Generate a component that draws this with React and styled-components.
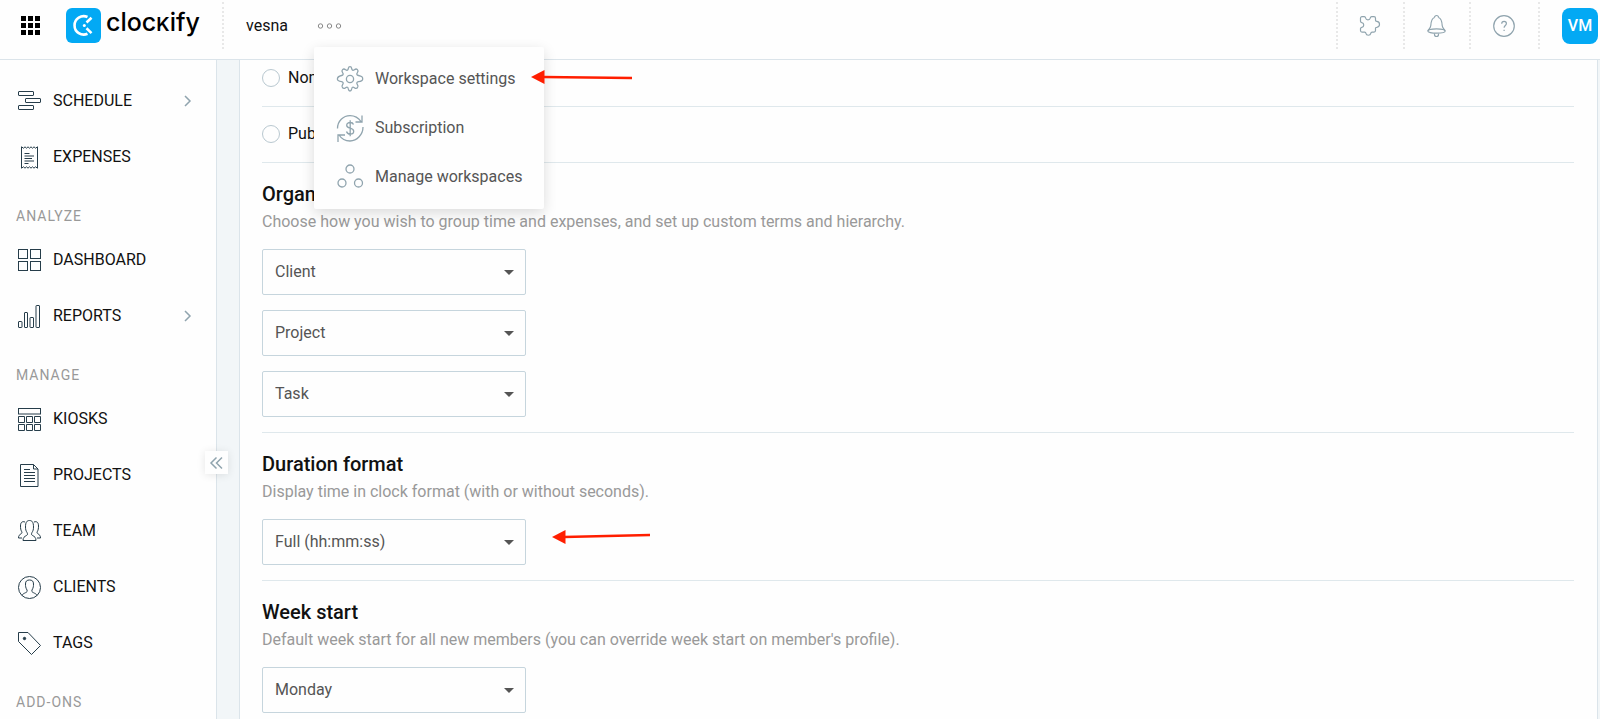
import React, { useState } from "react";
import styled, { createGlobalStyle } from "styled-components";

const GlobalStyle = createGlobalStyle`
  * {
    box-sizing: border-box;
  }
  body {
    margin: 0;
    background: #f2f6f8;
    color: #111;
    font-family: Roboto, "Liberation Sans", sans-serif;
    font-size: 16px;
    line-height: 20px;
  }
  button, select, input {
    font: inherit;
    color: inherit;
  }
  h2, p {
    margin: 0;
  }
`;

const icons = {
  schedule: (
    <>
      <rect x="0.5" y="1.5" width="15" height="4" rx="0.5" />
      <rect x="7.5" y="8.5" width="15" height="4" rx="0.5" />
      <rect x="0.5" y="15.5" width="15" height="4" rx="0.5" />
    </>
  ),
  expenses: (
    <>
      <path d="M3.5 .8l2 1.4 1.5-1.4 1.5 1.4L10 .8l1.5 1.4L13 .8l1.5 1.4L16 .8l1.5 1.4 2-1.4v21.4l-2-1.4-1.5 1.4-1.5-1.4-1.5 1.4-1.5-1.4-1.5 1.4-1.5-1.4L7 22.2l-1.5-1.4-2 1.4z" />
      <path d="M6.5 7.5h5M6.5 10h9.5M6.5 12.5h7.5M6.5 15h9.5M6.5 17.5h4" />
    </>
  ),
  dashboard: (
    <>
      <rect x="0.5" y="0.5" width="9" height="9" />
      <rect x="12.5" y="0.5" width="10" height="9" />
      <rect x="0.5" y="12.5" width="9" height="9" />
      <rect x="12.5" y="12.5" width="10" height="9" />
    </>
  ),
  reports: (
    <>
      <rect x="0.5" y="16.5" width="3.5" height="6" rx="0.5" />
      <rect x="6.5" y="7.5" width="3" height="15" rx="0.5" />
      <rect x="12" y="12.5" width="3.5" height="10" rx="0.5" />
      <rect x="18" y="0.5" width="3.5" height="22" rx="0.5" />
    </>
  ),
  kiosks: (
    <>
      <rect x="0.5" y="0.5" width="22" height="5.5" />
      <path d="M.5 8.5h6v6h-6zM8.5 8.5h6v6h-6zM16.5 8.5h6v6h-6zM.5 16.5h6v6h-6zM8.5 16.5h6v6h-6zM16.5 16.5h6v6h-6z" />
    </>
  ),
  projects: (
    <>
      <path d="M2.5.5h13l4.5 4.5v17.5h-17.5zM15.5.5v4.5h4.5" />
      <path d="M6 5.5h6M6 8.5h11M6 11.5h11M6 14.5h11M6 17.5h11" />
    </>
  ),
  team: (
    <>
      <path d="M5 20.5c0-3 1.5-4 3.5-5 1.5-.8 1-2 .5-3-1-1.5-1.5-3-1.5-5.5 0-5 1.5-6.500 4-6.500s4 1.500 4 6.500c0 2.500-.5 4-1.500 5.500-.5 1-1 2.200.5 3 2 1 3.500 2 3.500 5z" />
      <path d="M7 2C4 1 2.5 2.5 2.5 6c0 2.5.3 4 1 5.200.5 1 .8 1.800-.3 2.500C1.500 14.800.5 15.500.5 18H4M16 2c3-1 4.500.5 4.500 4 0 2.500-.3 4-1 5.200-.5 1-.8 1.800.3 2.500 1.700 1.100 2.700 1.800 2.700 4.300H19" />
    </>
  ),
  clients: (
    <>
      <circle cx="11.5" cy="11.5" r="11" />
      <path d="M4 19.500c.5-1.500 2-2 3.500-2.800 1.500-.7 2-1.200 1.500-2.700C7.500 11.500 7.500 10 7.500 8c0-3 1.500-4 4-4s4 1 4 4c0 2 0 3.500-1.500 6-.5 1.500 0 2 1.500 2.700 1.500.8 3 1.300 3.500 2.800" />
    </>
  ),
  tags: (
    <>
      <path d="M.5.5h9.5l12.500 13L13.500 22.500.5 9.500z" />
      <circle cx="6.5" cy="6.5" r="1.2" fill="currentColor" />
    </>
  ),
  settings: (
    <>
      <circle cx="13" cy="13" r="3.6" />
      <path d="M11.300 2.500c.5-2.400 2.900-2.400 3.400 0 .2 1.800 1.200 2.200 2.700 1.200 2.300-1.800 4.800.600 3 3-1.100 1.400-.6 2.500 1.100 2.800 3.400.7 4.400 1.300 4.200 3.500 0 1.700-.8 2.300-4.200 2.700-1.700.3-2.200 1.500-1.100 3 1.800 2.400-.7 4.800-3 3-1.500-1-2.500-.6-2.700 1.200-.5 2.800-2.900 2.800-3.400 0-.2-1.800-1.200-2.200-2.700-1.200-2.300 1.800-4.800-.6-3-3 1.100-1.500.6-2.700-1.100-3-2.400-.4-4.100-.9-4.100-2.700s1.700-2.900 4.100-3.500c1.700-.3 2.200-1.400 1.100-2.800-1.800-2.400.7-4.800 3-3 1.500 1 2.500.6 2.700-1.200z" />
    </>
  ),
  subscription: (
    <>
      <path d="M.5 13.500C.5 6 6.300.6 13 .6c4.500 0 8.500 2.200 11 5.900M25 .5v6.500h-6.500M26 12c0 7.500-6 14-13 14-4.500 0-8.500-2.200-11-6M1 27v-7h7" />
      <path d="M16.500 9.500C16 8 14.800 7.500 13.200 7.500c-2 0-3.500 1-3.500 2.700 0 4 7 2 7 6 0 1.700-1.500 2.900-3.500 2.900-1.800 0-3.200-.9-3.700-2.600M13.200 5.200v16" />
    </>
  ),
  workspaces: (
    <>
      <circle cx="13" cy="5" r="4" />
      <circle cx="5" cy="19" r="4" />
      <circle cx="21.5" cy="19" r="4" />
    </>
  ),
  addons: (
    <path d="M2 .7h2.400c.8 0 1 .5 1.200 1.300.5 2.600 4.200 2.600 4.700 0 .2-.8.5-1.300 1.300-1.300H14c.9 0 1.500.6 1.500 1.500v1.900c0 .8.4 1.200 1.200 1.200 1.800.1 2.800 1.300 2.800 3s-1 2.900-2.800 3c-.8 0-1.200.4-1.200 1.200v2.100c0 .9-.6 1.500-1.500 1.500h-1.900c-.8 0-1.200.4-1.300 1.200-.5 2.600-4.400 2.600-4.900 0-.1-.8-.5-1.200-1.300-1.200H2c-.9 0-1.500-.6-1.500-1.500v-2.100c0-.8.5-1 1.300-1.200 2.600-.5 2.600-4.200 0-4.700C1 6.400.5 6.100.5 5.300V2.200C.5 1.300 1.100.7 2 .7z" />
  ),
  bell: (
    <>
      <path d="M7.500 2.500C4.500 3.500 4 7 3.800 10.500 3.600 13 2 14 1 15.800M18 15.800c-1-1.800-2.600-2.800-2.800-5.300-.2-3.500-.7-7-3.700-8M7.500 2.500a2 2 0 1 1 4 0M7.500 18.500v1a2 2 0 0 0 4 0v-1" />
      <ellipse cx="9.5" cy="16" rx="8.7" ry="2.2" />
    </>
  ),
  help: (
    <>
      <circle cx="11" cy="11" r="10.3" />
      <path d="M8.700 8.800c0-1.500 1-2.400 2.400-2.400s2.300.9 2.300 2.200c0 1.900-2.300 2-2.300 4.200M11.100 14.700v1.300" />
    </>
  ),
  dots: (
    <>
      <circle cx="2.5" cy="3" r="2.2" />
      <circle cx="11.5" cy="3" r="2.2" />
      <circle cx="20.5" cy="3" r="2.2" />
    </>
  ),
  chevron: <path d="M1 1l5 5-5 5" />,
  collapse: <path d="M6.5.5L1 6l5.500 5.500M12 .5L6.500 6l5.500 5.500" />,
};

function Icon({ name, width, height, stroke = 1 }) {
  return (
    <svg
      width={width}
      height={height}
      viewBox={`0 0 ${width} ${height}`}
      fill="none"
      stroke="currentColor"
      strokeWidth={stroke}
      overflow="visible"
      aria-hidden="true"
    >
      {icons[name]}
    </svg>
  );
}

const navigation = [
  {
    items: [
      { name: "SCHEDULE", icon: "schedule", expandable: true },
      { name: "EXPENSES", icon: "expenses" },
    ],
  },
  {
    title: "ANALYZE",
    items: [
      { name: "DASHBOARD", icon: "dashboard" },
      { name: "REPORTS", icon: "reports", expandable: true },
    ],
  },
  {
    title: "MANAGE",
    items: [
      { name: "KIOSKS", icon: "kiosks" },
      { name: "PROJECTS", icon: "projects" },
      { name: "TEAM", icon: "team" },
      { name: "CLIENTS", icon: "clients" },
      { name: "TAGS", icon: "tags" },
    ],
  },
  { title: "ADD-ONS", items: [] },
];

const menuItems = [
  { name: "Workspace settings", icon: "settings", marked: true },
  { name: "Subscription", icon: "subscription" },
  { name: "Manage workspaces", icon: "workspaces" },
];

function Arrow({ length, end }) {
  return (
    <svg width={length} height="14" viewBox={`0 0 ${length} 14`} aria-hidden="true">
      <path d={`M12 7L${length} ${end}`} stroke="#ff1e00" strokeWidth="2.5" />
      <path d="M0 7L13.5 0v14z" fill="#ff1e00" />
    </svg>
  );
}

function Header() {
  return (
    <HeaderBar>
      <AppsButton aria-label="Apps">
        <svg width="19" height="19" viewBox="0 0 19 19" aria-hidden="true">
          <path d="M0 0h5v5H0zM7 0h5v5H7zM14 0h5v5h-5zM0 7h5v5H0zM7 7h5v5H7zM14 7h5v5h-5zM0 14h5v5H0zM7 14h5v5H7zM14 14h5v5h-5z" />
        </svg>
      </AppsButton>
      <Logo href="#home">
        <svg width="35" height="35" viewBox="0 0 35 35" aria-hidden="true">
          <rect width="35" height="35" rx="6" fill="#03a9f4" />
          <path d="M21.5 9A9.2 9.2 0 1 0 21.5 25.8" fill="none" stroke="#fff" strokeWidth="2.6" />
          <path d="M20.5 14.5l5-4.8M20.5 20.3l5 4.8" stroke="#fff" strokeWidth="2.6" />
          <circle cx="18.3" cy="17.4" r="1.5" fill="#fff" />
        </svg>
        <Wordmark>
          cloc<SmallCap>k</SmallCap>ify
        </Wordmark>
      </Logo>
      <Workspace>
        vesna
        <PlainButton aria-label="Workspace menu">
          <Icon name="dots" width={23} height={6} />
        </PlainButton>
        <Menu>
          {menuItems.map((item) => (
            <MenuItem key={item.name} href="#menu">
              <MenuIcon>
                <Icon name={item.icon} width={26} height={26} stroke={1.3} />
              </MenuIcon>
              {item.name}
              {item.marked && (
                <MenuArrow>
                  <Arrow length={101} end={8} />
                </MenuArrow>
              )}
            </MenuItem>
          ))}
        </Menu>
      </Workspace>
      <Tool aria-label="Add-ons">
        <Icon name="addons" width={20} height={20} stroke={1.2} />
      </Tool>
      <Tool aria-label="Notifications">
        <Icon name="bell" width={19} height={22} stroke={1.2} />
      </Tool>
      <Tool aria-label="Help">
        <Icon name="help" width={22} height={22} stroke={1.2} />
      </Tool>
      <Profile>
        <Avatar>VM</Avatar>
      </Profile>
    </HeaderBar>
  );
}

function Sidebar() {
  return (
    <SidebarPanel>
      {navigation.map((group, idx) => (
        <div key={idx}>
          {group.title && <GroupTitle>{group.title}</GroupTitle>}
          {group.items.map((item) => (
            <NavItem key={item.name} href="#nav">
              <NavIcon>
                <Icon name={item.icon} width={23} height={23} />
              </NavIcon>
              {item.name}
              {item.expandable && (
                <Expand>
                  <Icon name="chevron" width={7} height={12} stroke={1.5} />
                </Expand>
              )}
            </NavItem>
          ))}
        </div>
      ))}
      <CollapseButton aria-label="Collapse sidebar">
        <Icon name="collapse" width={13} height={12} stroke={1.5} />
      </CollapseButton>
    </SidebarPanel>
  );
}

function Dropdown({ value, label }) {
  return (
    <SelectBox>
      <Select aria-label={label} defaultValue={value}>
        <option>{value}</option>
      </Select>
      <Caret />
    </SelectBox>
  );
}

function App() {
  const [visibility, setVisibility] = useState("");

  return (
    <Page>
      <GlobalStyle />
      <Header />
      <Body>
        <Sidebar />
        <Card>
          {["None", "Public"].map((option) => (
            <RadioRow key={option}>
              <Radio
                type="radio"
                name="visibility"
                value={option}
                checked={visibility === option}
                onChange={() => setVisibility(option)}
              />
              {option}
            </RadioRow>
          ))}
          <Section>
            <Title>Organization</Title>
            <Description>
              Choose how you wish to group time and expenses, and set up custom terms and hierarchy.
            </Description>
            <Fields>
              <Dropdown value="Client" label="Client term" />
              <Dropdown value="Project" label="Project term" />
              <Dropdown value="Task" label="Task term" />
            </Fields>
          </Section>
          <Section>
            <Title>Duration format</Title>
            <Description>Display time in clock format (with or without seconds).</Description>
            <FieldRow>
              <Dropdown value="Full (hh:mm:ss)" label="Duration format" />
              <Arrow length={98} end={5} />
            </FieldRow>
          </Section>
          <Section>
            <Title>Week start</Title>
            <Description>
              Default week start for all new members (you can override week start on member's profile).
            </Description>
            <Dropdown value="Monday" label="Week start" />
          </Section>
        </Card>
      </Body>
    </Page>
  );
}

const Page = styled.div`
  display: flex;
  flex-direction: column;
  height: 100vh;
  overflow: hidden;
`;

const HeaderBar = styled.header`
  position: relative;
  z-index: 2;
  display: flex;
  flex: none;
  height: 60px;
  padding: 2px 2px 10px 0;
  background: #fefefe;
  border-bottom: 1px solid #dbe4ea;
`;

const PlainButton = styled.button`
  display: flex;
  align-items: center;
  justify-content: center;
  padding: 0;
  border: 0;
  background: none;
  color: #888;
  cursor: pointer;
`;

const AppsButton = styled(PlainButton)`
  width: 60px;
  color: #000;
`;

const Logo = styled.a`
  display: flex;
  align-items: center;
  gap: 5px;
  width: 162px;
  padding-left: 6px;
  color: #000;
  text-decoration: none;
`;

const Wordmark = styled.span`
  padding-bottom: 4px;
  font-family: Inter, sans-serif;
  font-size: 25px;
  font-weight: 500;
  line-height: 32px;
`;

const SmallCap = styled.span`
  font-size: 19px;
  font-weight: 600;
  text-transform: uppercase;
`;

const Workspace = styled.div`
  position: relative;
  display: flex;
  align-items: center;
  flex: 1;
  gap: 30px;
  padding-left: 22px;
  border-left: 2px dotted #e8e8e8;
`;

const Menu = styled.nav`
  position: absolute;
  top: 45px;
  left: 90px;
  width: 230px;
  padding: 7px 0 8px;
  background: #fefefe;
  border-radius: 2px;
  box-shadow: 0 4px 14px rgba(0, 0, 0, 0.14);
`;

const MenuItem = styled.a`
  position: relative;
  display: flex;
  align-items: center;
  gap: 12px;
  height: 49px;
  padding-left: 23px;
  color: #555;
  text-decoration: none;
`;

const MenuIcon = styled.span`
  display: flex;
  color: #90a4ae;
`;

const MenuArrow = styled.span`
  position: absolute;
  top: 16px;
  left: 217px;
  display: flex;
`;

const Tool = styled(PlainButton)`
  padding: 0 23px 0 22px;
  border-left: 2px dotted #e8e8e8;
  color: #90a4ae;
`;

const Profile = styled.div`
  display: flex;
  align-items: center;
  padding-left: 22px;
  border-left: 2px dotted #e8e8e8;
`;

const Avatar = styled(PlainButton)`
  width: 36px;
  height: 36px;
  border-radius: 8px;
  background: #03a9f4;
  color: #fff;
  font-weight: 500;
`;

const Body = styled.div`
  display: flex;
  flex: 1;
  min-height: 0;
`;

const SidebarPanel = styled.nav`
  position: relative;
  width: 217px;
  flex: none;
  padding-top: 13px;
  background: #fefefe;
  border-right: 1px solid #dbe4ea;
`;

const GroupTitle = styled.div`
  padding: 22px 16px 7px;
  color: #999;
  font-size: 14px;
  line-height: 18px;
  letter-spacing: 1px;
`;

const NavItem = styled.a`
  display: flex;
  align-items: center;
  height: 56px;
  padding: 0 25px 0 18px;
  gap: 12px;
  color: #111;
  text-decoration: none;
`;

const NavIcon = styled.span`
  display: flex;
  color: #263d4a;
`;

const Expand = styled.span`
  display: flex;
  margin-left: auto;
  color: #90a4ae;
`;

const CollapseButton = styled(PlainButton)`
  position: absolute;
  top: 391px;
  right: -12px;
  width: 23px;
  height: 23px;
  background: #fefefe;
  box-shadow: 0 1px 8px rgba(0, 0, 0, 0.1);
  color: #90a4ae;
`;

const Card = styled.main`
  flex: 1;
  min-width: 0;
  overflow: hidden;
  margin: 0 2px 0 22px;
  padding: 0 23px 0 22px;
  background: #fefefe;
  border: solid #dbe4ea;
  border-width: 0 1px;
`;

const RadioRow = styled.label`
  display: flex;
  align-items: center;
  gap: 8px;
  padding: 17px 0 18px;
  border-bottom: 1px solid #dfe8ec;

  &:first-child {
    padding-top: 8px;
  }
`;

const Radio = styled.input`
  appearance: none;
  width: 18px;
  height: 18px;
  margin: 0;
  border: 1px solid #b9c8d0;
  border-radius: 50%;

  &:checked {
    border: 5px solid #03a9f4;
  }
`;

const Section = styled.section`
  padding: 18px 0 15px;
  border-bottom: 1px solid #dfe8ec;
`;

const Title = styled.h2`
  font-size: 20px;
  font-weight: 500;
  line-height: 26px;
`;

const Description = styled.p`
  padding: 3px 0 15px;
  color: #999;
  line-height: 24px;
`;

const Fields = styled.div`
  display: flex;
  flex-direction: column;
  gap: 15px;
`;

const FieldRow = styled.div`
  display: flex;
  gap: 26px;

  > svg {
    margin-top: 11px;
  }
`;

const SelectBox = styled.div`
  position: relative;
  width: 264px;
`;

const Select = styled.select`
  display: block;
  appearance: none;
  width: 100%;
  height: 46px;
  padding: 0 12px;
  background: #fefefe;
  border: 1px solid #c6d5dd;
  border-radius: 2px;
  color: #555;
`;

const Caret = styled.span`
  position: absolute;
  top: 21px;
  right: 12px;
  border: solid transparent;
  border-width: 5px 5px 0;
  border-top-color: #555;
  pointer-events: none;
`;

export default App;
